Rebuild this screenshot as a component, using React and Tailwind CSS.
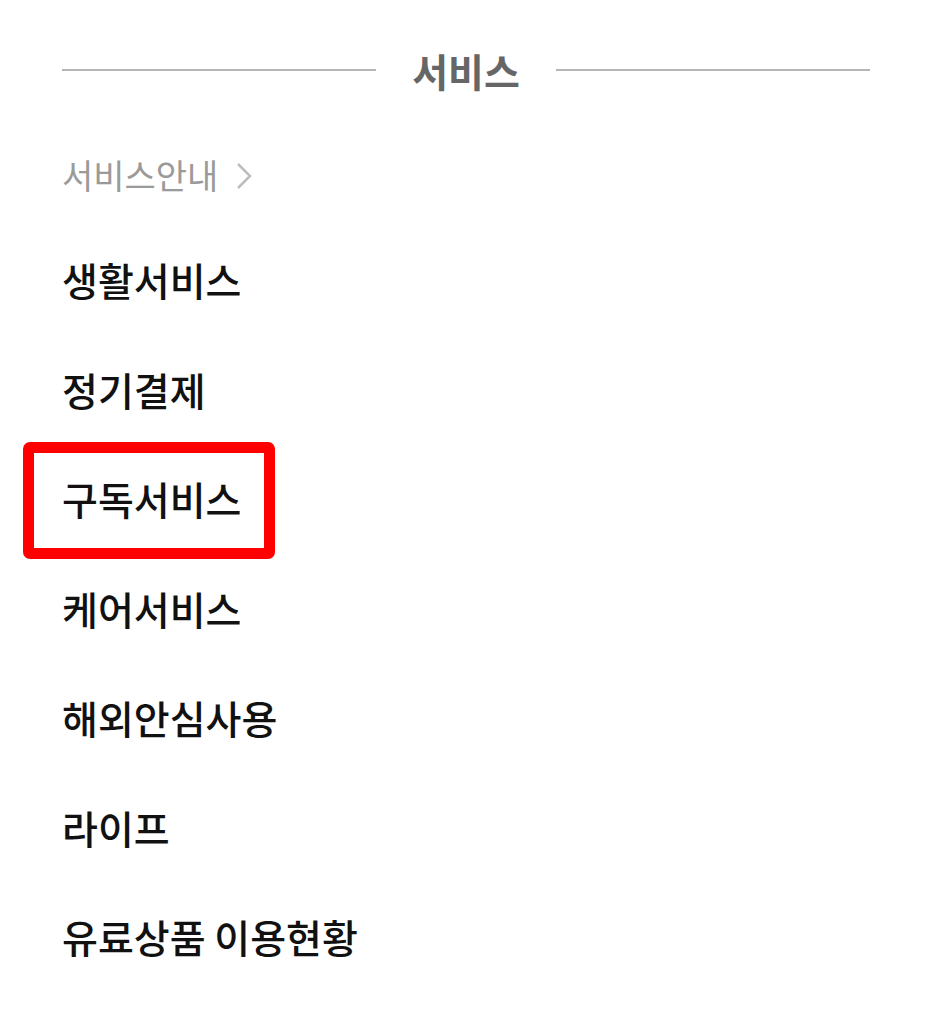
import React from 'react';

const items = ['생활서비스', '정기결제', '구독서비스', '케어서비스', '해외안심사용', '라이프', '유료상품 이용현황'];

function Chevron() {
  return (
    <svg width="18" height="28" viewBox="0 0 18 28" className="ml-[17px] mt-[2px]">
      <polyline points="3,2 15,14 3,26" fill="none" stroke="#bdbdbd" strokeWidth="2.5" />
    </svg>
  );
}

export default function App() {
  return (
    <div
      className="w-[932px] h-[1024px] bg-white pt-[40px] overflow-hidden"
      style={{ fontFamily: '"Noto Sans CJK KR", "Noto Sans", sans-serif' }}
    >
      {/* section header */}
      <div className="h-[60px] px-[62px] flex items-center">
        <div className="flex-1 h-[2px] bg-[#b5b5b5]" />
        <div className="px-[36px] text-[39px] leading-none font-bold text-[#666666]">서비스</div>
        <div className="flex-1 h-[2px] bg-[#b5b5b5]" />
      </div>

      <div className="mt-[40px] h-[70px] px-[62px] flex items-center">
        <span className="text-[34px] leading-none text-[#9a9a9a]">서비스안내</span>
        <Chevron />
      </div>

      <ul className="mt-[15px]">
        {items.map((item, i) => (
          <li key={item} className="relative h-[109.5px] px-[62px] flex items-center">
            <span className="text-[39px] leading-none font-medium text-[#111111]">{item}</span>
            {i === 2 && (
              <div className="absolute left-[23px] top-[-2px] w-[252px] h-[117px] border-[11px] border-[#ff0000] rounded-[7px]" />
            )}
          </li>
        ))}
      </ul>
    </div>
  );
}
